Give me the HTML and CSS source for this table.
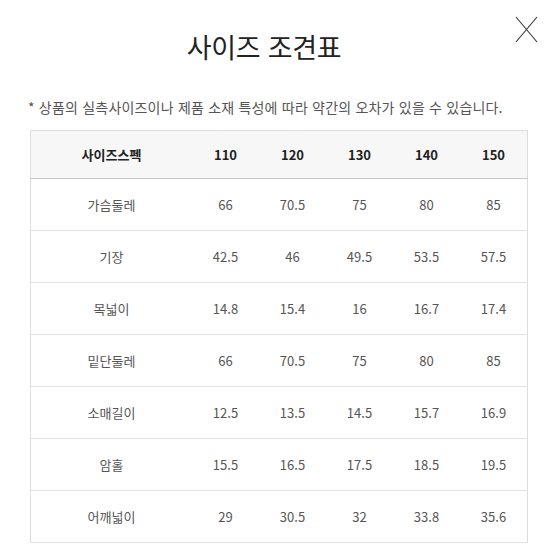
FILE: index.html
```html
<!DOCTYPE html>
<html lang="ko">
<head>
<meta charset="utf-8">
<title>사이즈 조견표</title>
<link rel="stylesheet" href="styles.css">
</head>
<body>
<div class="popup">
  <button class="close" aria-label="닫기">
    <svg width="23" height="27" viewBox="0 0 23 27"><path d="M1 1 L22 26 M22 1 L1 26" stroke="#333" stroke-width="1.1" fill="none"/></svg>
  </button>
  <h1 class="title">사이즈 조견표</h1>
  <p class="note">* 상품의 실측사이즈이나 제품 소재 특성에 따라 약간의 오차가 있을 수 있습니다.</p>
  <table class="size-table">
    <thead>
      <tr><th>사이즈스펙</th><th>110</th><th>120</th><th>130</th><th>140</th><th>150</th></tr>
    </thead>
    <tbody>
      <tr><td>가슴둘레</td><td>66</td><td>70.5</td><td>75</td><td>80</td><td>85</td></tr>
      <tr><td>기장</td><td>42.5</td><td>46</td><td>49.5</td><td>53.5</td><td>57.5</td></tr>
      <tr><td>목넓이</td><td>14.8</td><td>15.4</td><td>16</td><td>16.7</td><td>17.4</td></tr>
      <tr><td>밑단둘레</td><td>66</td><td>70.5</td><td>75</td><td>80</td><td>85</td></tr>
      <tr><td>소매길이</td><td>12.5</td><td>13.5</td><td>14.5</td><td>15.7</td><td>16.9</td></tr>
      <tr><td>암홀</td><td>15.5</td><td>16.5</td><td>17.5</td><td>18.5</td><td>19.5</td></tr>
      <tr><td>어깨넓이</td><td>29</td><td>30.5</td><td>32</td><td>33.8</td><td>35.6</td></tr>
    </tbody>
  </table>
</div>
</body>
</html>
```

FILE: styles.css
```css
html, body {
  margin: 0;
  padding: 0;
  background: #fff;
}
body {
  font-family: "Noto Sans CJK KR", "Noto Sans", sans-serif;
  color: #555;
}
.popup {
  position: relative;
  width: 550px;
  height: 550px;
  overflow: hidden;
}
.close {
  position: absolute;
  top: 16px;
  left: 515px;
  width: 23px;
  height: 27px;
  padding: 0;
  border: 0;
  background: none;
  line-height: 0;
}
.title {
  margin: 0;
  padding: 27px 22px 0 0;
  font-size: 27px;
  line-height: 40px;
  font-weight: 400;
  color: #222;
  text-align: center;
  letter-spacing: -0.3px;
}
.note {
  margin: 30px 0 0 28px;
  font-size: 14px;
  line-height: 20px;
  color: #555;
  letter-spacing: 0.2px;
}
.size-table {
  margin: 13px 0 0 30px;
  width: 495px;
  border-collapse: collapse;
  table-layout: fixed;
  font-size: 13px;
  border: 1px solid #ddd;
}
.size-table th,
.size-table td {
  padding: 0;
  text-align: center;
  width: 67px;
}
.size-table th:first-child,
.size-table td:first-child {
  width: 161px;
}
.size-table thead tr {
  height: 48px;
  background: #f7f7f7;
  border-bottom: 1px solid #c8c8c8;
}
.size-table th {
  font-weight: 700;
  color: #222;
}
.size-table tbody tr {
  height: 52px;
  border-bottom: 1px solid #e2e2e2;
}
.size-table td {
  color: #555;
}
```
